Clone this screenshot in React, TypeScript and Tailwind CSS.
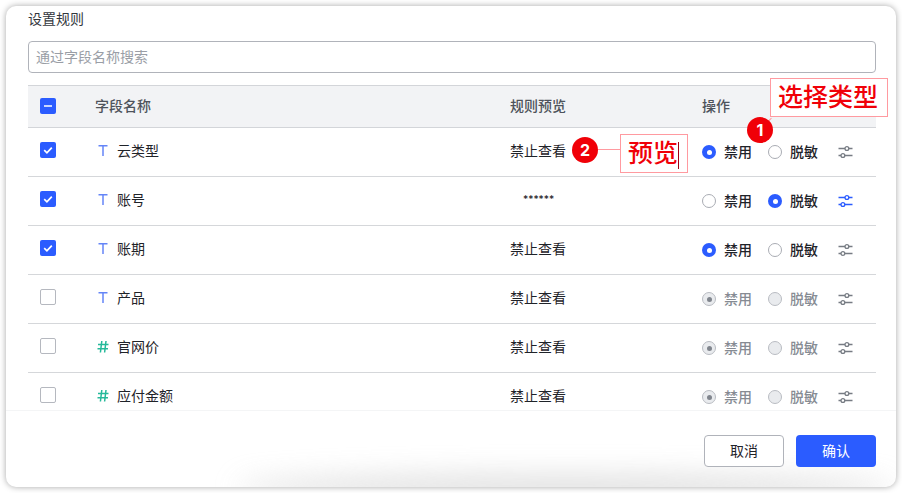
const fontStack = "font-['Inter','Noto_Sans_CJK_SC',sans-serif]";

type Mode = "ban" | "mask";

interface Row {
  name: string;
  kind: "text" | "number";
  checked: boolean;
  mode: Mode;
  preview: string;
}

const rows: Row[] = [
  { name: "云类型", kind: "text", checked: true, mode: "ban", preview: "禁止查看" },
  { name: "账号", kind: "text", checked: true, mode: "mask", preview: "******" },
  { name: "账期", kind: "text", checked: true, mode: "ban", preview: "禁止查看" },
  { name: "产品", kind: "text", checked: false, mode: "ban", preview: "禁止查看" },
  { name: "官网价", kind: "number", checked: false, mode: "ban", preview: "禁止查看" },
  { name: "应付金额", kind: "number", checked: false, mode: "ban", preview: "禁止查看" },
];

function Checkbox({ checked }: { checked: boolean }) {
  if (!checked) {
    return <span className="block h-4 w-4 rounded-[2px] border border-[#b5b8bf] bg-white" />;
  }
  return (
    <span className="flex h-4 w-4 items-center justify-center rounded-[2px] bg-[#2b5cff]">
      <svg width="10" height="10" viewBox="0 0 10 10" fill="none">
        <path d="M1.2 5.2 3.9 7.8 8.8 2.6" stroke="#fff" strokeWidth="1.7" />
      </svg>
    </span>
  );
}

function Radio({ on, disabled, label }: { on: boolean; disabled: boolean; label: string }) {
  let circle = "border border-[#a9acb3] bg-white";
  let dot = "";
  if (disabled) {
    circle = "border border-[#b9bcc2] bg-[#e9ebee]";
    if (on) dot = "bg-[#80858d]";
  } else if (on) {
    circle = "bg-[#2b5cff]";
    dot = "bg-white";
  }
  return (
    <div className="flex items-center gap-2">
      <span className={`flex h-[14px] w-[14px] items-center justify-center rounded-full ${circle}`}>
        {dot && <span className={`h-[5px] w-[5px] rounded-full ${dot}`} />}
      </span>
      <span className={`pb-[2px] text-[14px] font-medium ${disabled ? "text-[#868b93]" : "text-[#1f2329]"}`}>{label}</span>
    </div>
  );
}

function Sliders({ color }: { color: string }) {
  return (
    <svg className="-ml-px" width="15" height="14" viewBox="0 0 15 14" fill="none" stroke={color} strokeWidth="1.3">
      <path d="M0.5 3.5H7M10.8 3.5H14.5M0.5 10.5H3M6.8 10.5H14.5" />
      <circle cx="8.9" cy="3.5" r="1.9" />
      <circle cx="4.9" cy="10.5" r="1.9" />
    </svg>
  );
}

function FieldIcon({ kind }: { kind: Row["kind"] }) {
  if (kind === "text") {
    return (
      <svg width="12" height="12" viewBox="0 0 12 12" fill="none" stroke="#6485f7" strokeWidth="1.5">
        <path d="M1.5 1.8H10.5M6 1.8V12" />
      </svg>
    );
  }
  return (
    <svg width="12" height="13" viewBox="0 0 12 13" fill="none" stroke="#26b99a" strokeWidth="1.5">
      <path d="M1 4.5H11.5M0.5 8.8H11M4.8 1 3.4 12.5M9 1 7.6 12.5" />
    </svg>
  );
}

function Badge({ n, className }: { n: number; className: string }) {
  return (
    <span
      className={`absolute flex h-[26px] w-[26px] items-center justify-center rounded-full bg-[#f00008] text-[16px] font-bold text-white ${className}`}
    >
      {n}
    </span>
  );
}

export default function App() {
  return (
    <div className={`relative h-[493px] w-[902px] overflow-hidden bg-white p-[6px] ${fontStack}`}>
      <div className="relative flex h-[481px] flex-col overflow-hidden rounded-[10px] bg-white shadow-[0_0_6px_rgba(0,0,0,0.35)]">
        <div className="flex h-[26px] shrink-0 items-center px-[22px] pb-[2px] text-[14px] text-[#33373d]">设置规则</div>

        <div className="ml-[22px] mr-5 mt-[9px] flex h-8 shrink-0 items-center rounded-[4px] border border-[#b0b3ba] pb-[2px] pl-[7px] text-[14px] text-[#9a9ea6]">
          通过字段名称搜索
        </div>

        <div className="ml-[22px] mr-5 mt-3 flex h-[43px] shrink-0 items-center border-y border-[#d3d5d9] bg-[#f2f3f5] text-[14px] font-medium text-[#4e535b]">
          <div className="w-[67px] pl-3">
            <span className="flex h-4 w-4 -translate-y-px items-center justify-center rounded-[2px] bg-[#2b5cff]">
              <span className="h-[2px] w-2 bg-[#c9d6ff]" />
            </span>
          </div>
          <div className="w-[415px] pb-[2px]">字段名称</div>
          <div className="w-[192px] pb-[2px]">规则预览</div>
          <div className="pb-[2px]">操作</div>
        </div>

        <div className="ml-[22px] mr-5 h-[282px] shrink-0 overflow-hidden">
          {rows.map((row) => {
            const disabled = !row.checked;
            const masked = row.preview === "******";
            return (
              <div key={row.name} className="flex h-[49px] items-center border-b border-[#d5d7da] text-[14px] text-[#1f2329]">
                <div className="w-[68px] pb-1 pl-3">
                  <Checkbox checked={row.checked} />
                </div>
                <div className="flex w-[414px] items-center gap-2 pb-1 pl-[1px]">
                  <FieldIcon kind={row.kind} />
                  <span>{row.name}</span>
                </div>
                <div className={masked ? "w-[192px] pb-1 pl-[13px] text-[10px] font-medium" : "w-[192px] pb-1"}>{row.preview}</div>
                <div className="flex items-center">
                  <div className="w-[66px]">
                    <Radio on={row.mode === "ban"} disabled={disabled} label="禁用" />
                  </div>
                  <div className="w-[71px]">
                    <Radio on={row.mode === "mask"} disabled={disabled} label="脱敏" />
                  </div>
                  <Sliders color={row.mode === "mask" ? "#2b5cff" : "#777c84"} />
                </div>
              </div>
            );
          })}
        </div>

        <div className="relative flex flex-1 items-center justify-end gap-3 border-t border-[#f4f5f6] px-5 pt-[3px] text-[14px]">
          <div className="absolute -bottom-[14px] left-[230px] right-0 h-[26px] rounded-[50%] bg-[#c9c9c9] opacity-60 blur-[14px]" />
          <button className="relative h-8 w-20 rounded-[4px] border border-[#b0b3ba] bg-white text-[#1f2329]">取消</button>
          <button className="relative h-8 w-20 rounded-[4px] bg-[#2b5cff] text-white">确认</button>
        </div>
      </div>

      {/* annotations drawn over the dialog */}
      <div className="absolute left-[770px] top-[78px] flex h-[39px] w-[118px] items-center justify-center border border-[#ff9aa0] bg-white pr-[2px] text-[25px] font-medium whitespace-nowrap text-[#f00008]">
        选择类型
      </div>
      <div className="absolute left-[766px] top-[116px] h-[14px] w-px rotate-45 bg-[#ff9aa0]" />
      <Badge n={1} className="left-[747px] top-[117px]" />

      <Badge n={2} className="left-[572px] top-[137px]" />
      <div className="absolute left-[598px] top-[149px] h-px w-[22px] bg-[#ff9aa0]" />
      <div className="absolute left-[620px] top-[134px] flex h-[39px] w-[68px] items-center border border-[#ff9aa0] bg-white pl-[7px] text-[25px] font-medium whitespace-nowrap text-[#f00008]">
        预览
        <span className="absolute left-[57px] top-[7px] h-[27px] w-px bg-[#a00010]" />
      </div>
    </div>
  );
}
